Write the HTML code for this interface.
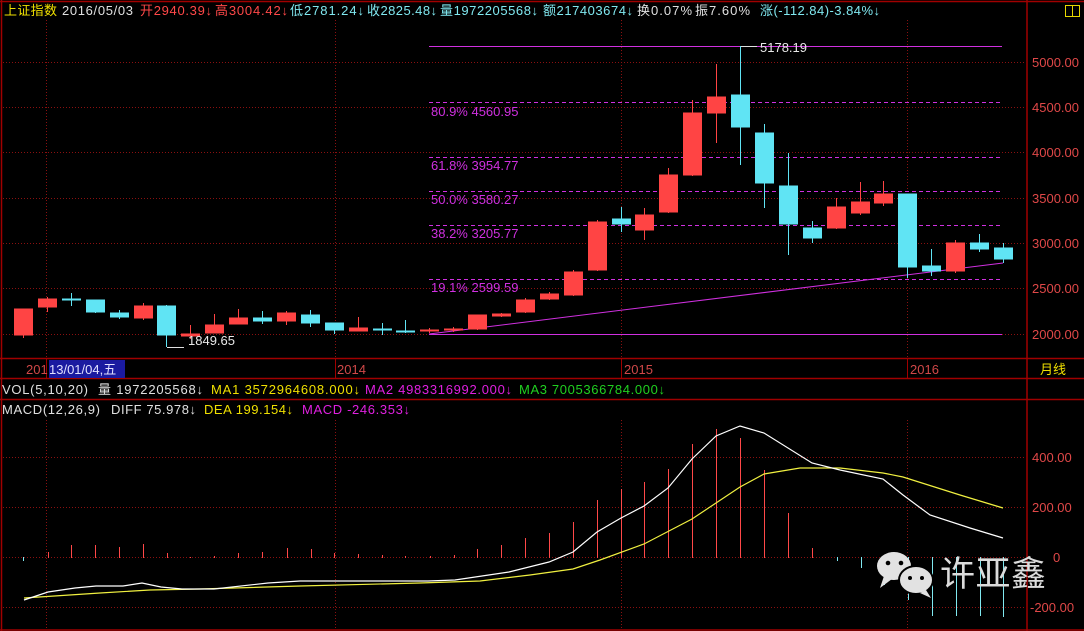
<!DOCTYPE html>
<html><head><meta charset="utf-8"><style>
html,body{margin:0;padding:0;background:#000;width:1084px;height:631px;overflow:hidden}
svg{display:block;font-family:"Liberation Sans","Noto Sans CJK SC",sans-serif}
</style></head><body>
<svg width="1084" height="631" viewBox="0 0 1084 631" xmlns="http://www.w3.org/2000/svg">
<rect width="1084" height="631" fill="#000"/>
<g stroke="#8a1010" stroke-width="1" stroke-dasharray="1,2">
<line x1="3" y1="62.5" x2="1026" y2="62.5"/><line x1="3" y1="107.5" x2="1026" y2="107.5"/>
<line x1="3" y1="152.5" x2="1026" y2="152.5"/><line x1="3" y1="198.5" x2="1026" y2="198.5"/>
<line x1="3" y1="243.5" x2="1026" y2="243.5"/><line x1="3" y1="288.5" x2="1026" y2="288.5"/>
<line x1="3" y1="334.5" x2="1026" y2="334.5"/>
<line x1="3" y1="457.5" x2="1026" y2="457.5"/><line x1="3" y1="507.5" x2="1026" y2="507.5"/>
<line x1="3" y1="557.5" x2="1026" y2="557.5"/><line x1="3" y1="607.5" x2="1026" y2="607.5"/>
<line x1="46.5" y1="20" x2="46.5" y2="358"/><line x1="335.5" y1="20" x2="335.5" y2="358"/>
<line x1="621.5" y1="20" x2="621.5" y2="358"/><line x1="907.5" y1="20" x2="907.5" y2="358"/>
<line x1="46.5" y1="420" x2="46.5" y2="630"/><line x1="335.5" y1="420" x2="335.5" y2="630"/>
<line x1="621.5" y1="420" x2="621.5" y2="630"/><line x1="907.5" y1="420" x2="907.5" y2="630"/>
</g>
<g stroke="#a00000" stroke-width="1.5" fill="none">
<line x1="0" y1="1.5" x2="1084" y2="1.5"/>
<line x1="1.5" y1="0" x2="1.5" y2="631"/>
<line x1="1027" y1="0" x2="1027" y2="631"/>
<line x1="0" y1="358.5" x2="1084" y2="358.5"/>
<line x1="0" y1="378.5" x2="1084" y2="378.5"/>
<line x1="0" y1="399.5" x2="1084" y2="399.5"/>
<line x1="0" y1="630" x2="1084" y2="630"/>
</g>
<g stroke="#a00000"><line x1="46.5" y1="359" x2="46.5" y2="378"/><line x1="335.5" y1="359" x2="335.5" y2="378"/><line x1="621.5" y1="359" x2="621.5" y2="378"/><line x1="907.5" y1="359" x2="907.5" y2="378"/></g>
<rect x="1065.5" y="5.5" width="14" height="11" fill="none" stroke="#e8d800" stroke-width="1"/>
<line x1="1072.5" y1="5" x2="1072.5" y2="16" stroke="#e8d800"/>

<g stroke="#d030e0" stroke-width="1">
<line x1="429" y1="46.5" x2="1002" y2="46.5"/>
<line x1="429" y1="334.5" x2="1002" y2="334.5"/>
<g stroke-dasharray="4,3">
<line x1="429" y1="102.5" x2="1002" y2="102.5"/>
<line x1="429" y1="157.5" x2="1002" y2="157.5"/>
<line x1="429" y1="191.5" x2="1002" y2="191.5"/>
<line x1="429" y1="225.5" x2="1002" y2="225.5"/>
<line x1="429" y1="279.5" x2="1002" y2="279.5"/>
</g>
<line x1="429" y1="334" x2="1003" y2="263"/>
</g>
<g fill="#d030e0" font-size="13">
<text x="431" y="116">80.9% 4560.95</text>
<text x="431" y="170">61.8% 3954.77</text>
<text x="431" y="204">50.0% 3580.27</text>
<text x="431" y="238">38.2% 3205.77</text>
<text x="431" y="292">19.1% 2599.59</text>
</g>

<g stroke-width="1">
<g fill="#ff4444" stroke="#ff4444" transform="translate(0.5,0)">
<line x1="23" y1="309" x2="23" y2="338"/><rect x="14" y="309" width="18" height="26"/>
<line x1="47" y1="297" x2="47" y2="312"/><rect x="38" y="299" width="18" height="8"/>
<line x1="143" y1="303" x2="143" y2="320"/><rect x="134" y="306" width="18" height="12"/>
<line x1="190" y1="325" x2="190" y2="339"/><rect x="181" y="334" width="18" height="2"/>
<line x1="214" y1="314" x2="214" y2="333"/><rect x="205" y="325" width="18" height="8"/>
<line x1="238" y1="309" x2="238" y2="324"/><rect x="229" y="318" width="18" height="6"/>
<line x1="286" y1="311" x2="286" y2="325"/><rect x="277" y="313" width="18" height="8"/>
<line x1="358" y1="317" x2="358" y2="331"/><rect x="349" y="328" width="18" height="3"/>
<line x1="429" y1="328" x2="429" y2="333"/><rect x="420" y="330" width="18" height="1"/>
<line x1="453" y1="327" x2="453" y2="332"/><rect x="444" y="329" width="18" height="1"/>
<line x1="477" y1="315" x2="477" y2="330"/><rect x="468" y="315" width="18" height="14"/>
<line x1="501" y1="313" x2="501" y2="317"/><rect x="492" y="314" width="18" height="2"/>
<line x1="525" y1="298" x2="525" y2="313"/><rect x="516" y="300" width="18" height="12"/>
<line x1="549" y1="292" x2="549" y2="300"/><rect x="540" y="294" width="18" height="5"/>
<line x1="573" y1="270" x2="573" y2="296"/><rect x="564" y="272" width="18" height="23"/>
<line x1="597" y1="220" x2="597" y2="271"/><rect x="588" y="222" width="18" height="48"/>
<line x1="644" y1="208" x2="644" y2="240"/><rect x="635" y="215" width="18" height="15"/>
<line x1="668" y1="168" x2="668" y2="213"/><rect x="659" y="175" width="18" height="37"/>
<line x1="692" y1="100" x2="692" y2="176"/><rect x="683" y="113" width="18" height="62"/>
<line x1="716" y1="64" x2="716" y2="143"/><rect x="707" y="97" width="18" height="16"/>
<line x1="836" y1="198" x2="836" y2="229"/><rect x="827" y="207" width="18" height="21"/>
<line x1="860" y1="182" x2="860" y2="215"/><rect x="851" y="202" width="18" height="11"/>
<line x1="883" y1="181" x2="883" y2="206"/><rect x="874" y="194" width="18" height="9"/>
<line x1="955" y1="240" x2="955" y2="273"/><rect x="946" y="243" width="18" height="28"/>
</g>
<g fill="#60e4f4" stroke="#60e4f4" transform="translate(0.5,0)">
<line x1="71" y1="293" x2="71" y2="306"/><rect x="62" y="299" width="18" height="1"/>
<line x1="95" y1="300" x2="95" y2="313"/><rect x="86" y="300" width="18" height="12"/>
<line x1="119" y1="310" x2="119" y2="319"/><rect x="110" y="313" width="18" height="4"/>
<line x1="166" y1="305" x2="166" y2="347"/><rect x="157" y="306" width="18" height="29"/>
<line x1="262" y1="311" x2="262" y2="324"/><rect x="253" y="318" width="18" height="3"/>
<line x1="310" y1="310" x2="310" y2="327"/><rect x="301" y="315" width="18" height="8"/>
<line x1="334" y1="323" x2="334" y2="334"/><rect x="325" y="323" width="18" height="7"/>
<line x1="382" y1="323" x2="382" y2="335"/><rect x="373" y="329" width="18" height="1"/>
<line x1="405" y1="320" x2="405" y2="333"/><rect x="396" y="331" width="18" height="1"/>
<line x1="621" y1="207" x2="621" y2="232"/><rect x="612" y="219" width="18" height="5"/>
<line x1="740" y1="46" x2="740" y2="165"/><rect x="731" y="95" width="18" height="32"/>
<line x1="764" y1="124" x2="764" y2="208"/><rect x="755" y="133" width="18" height="50"/>
<line x1="788" y1="153" x2="788" y2="255"/><rect x="779" y="186" width="18" height="38"/>
<line x1="812" y1="221" x2="812" y2="243"/><rect x="803" y="228" width="18" height="10"/>
<line x1="907" y1="194" x2="907" y2="278"/><rect x="898" y="194" width="18" height="73"/>
<line x1="931" y1="249" x2="931" y2="276"/><rect x="922" y="266" width="18" height="5"/>
<line x1="979" y1="234" x2="979" y2="252"/><rect x="970" y="243" width="18" height="6"/>
<line x1="1003" y1="243" x2="1003" y2="263"/><rect x="994" y="248" width="18" height="11"/>
</g>
</g>
<g stroke="#e0e0e0" fill="none"><polyline points="167,347.5 184,347.5"/><polyline points="741,46.5 757,46.5"/></g>
<g fill="#e8e8e8" font-size="13"><text x="188" y="345">1849.65</text><text x="760" y="52">5178.19</text></g>

<g fill="#e04848" font-size="13">
<text x="1032" y="67">5000.00</text><text x="1032" y="112">4500.00</text>
<text x="1032" y="157">4000.00</text><text x="1032" y="203">3500.00</text>
<text x="1032" y="248">3000.00</text><text x="1032" y="293">2500.00</text>
<text x="1032" y="339">2000.00</text>
<text x="1032" y="462">400.00</text><text x="1032" y="512">200.00</text>
<text x="1053" y="562">0</text><text x="1030" y="612">-200.00</text>
</g>

<rect x="49" y="360" width="76" height="18" fill="#1a1aa0"/>
<g font-size="13">
<text x="26" y="374" fill="#d04848">201</text>
<text x="49" y="374" fill="#e0e0ff">13/01/04,五</text>
<text x="337" y="374" fill="#d04848">2014</text>
<text x="624" y="374" fill="#d04848">2015</text>
<text x="910" y="374" fill="#d04848">2016</text>
<text x="1040" y="374" fill="#f0e000">月线</text>
</g>

<g font-size="13">
<text x="4" y="15" fill="#f0e000" textLength="53">上证指数</text>
<text x="62" y="15" fill="#e0e0e0" textLength="71">2016/05/03</text>
<text x="140" y="15" fill="#ff4848" textLength="72">开2940.39↓</text>
<text x="215" y="15" fill="#ff4848" textLength="73">高3004.42↓</text>
<text x="290" y="15" fill="#80e8f0" textLength="74">低2781.24↓</text>
<text x="367" y="15" fill="#80e8f0" textLength="70">收2825.48↓</text>
<text x="440" y="15" fill="#80e8f0" textLength="98">量1972205568↓</text>
<text x="543" y="15" fill="#80e8f0" textLength="90">额217403674↓</text>
<text x="637" y="15" fill="#e0e0e0" textLength="55">换0.07%</text>
<text x="695" y="15" fill="#e0e0e0" textLength="55">振7.60%</text>
<text x="760" y="15" fill="#80e8f0" textLength="120">涨(-112.84)-3.84%↓</text>
</g>
<g font-size="13">
<text x="2" y="394" fill="#e0e0e0" textLength="86">VOL(5,10,20)</text>
<text x="98" y="394" fill="#e0e0e0" textLength="105">量 1972205568↓</text>
<text x="211" y="394" fill="#f0e000" textLength="149">MA1 3572964608.000↓</text>
<text x="365" y="394" fill="#e020e0" textLength="147">MA2 4983316992.000↓</text>
<text x="519" y="394" fill="#20d020" textLength="146">MA3 7005366784.000↓</text>
<text x="2" y="414" fill="#e0e0e0" textLength="98">MACD(12,26,9)</text>
<text x="111" y="414" fill="#e0e0e0" textLength="85">DIFF 75.978↓</text>
<text x="204" y="414" fill="#f0e000" textLength="89">DEA 199.154↓</text>
<text x="302" y="414" fill="#e020e0" textLength="108">MACD -246.353↓</text>
</g>

<g stroke="#ff4848" stroke-width="1" transform="translate(0.5,0)">
<line x1="48" y1="552" x2="48" y2="558"/><line x1="71" y1="545" x2="71" y2="558"/>
<line x1="95" y1="545" x2="95" y2="558"/><line x1="119" y1="547" x2="119" y2="558"/>
<line x1="143" y1="544" x2="143" y2="558"/><line x1="167" y1="553" x2="167" y2="558"/>
<line x1="190" y1="557" x2="190" y2="558"/><line x1="214" y1="556" x2="214" y2="558"/>
<line x1="238" y1="553" x2="238" y2="558"/><line x1="262" y1="552" x2="262" y2="558"/>
<line x1="287" y1="548" x2="287" y2="558"/><line x1="311" y1="549" x2="311" y2="558"/>
<line x1="334" y1="553" x2="334" y2="558"/><line x1="358" y1="554" x2="358" y2="558"/>
<line x1="382" y1="555" x2="382" y2="558"/><line x1="405" y1="556" x2="405" y2="558"/>
<line x1="430" y1="556" x2="430" y2="558"/><line x1="454" y1="555" x2="454" y2="558"/>
<line x1="477" y1="549" x2="477" y2="558"/><line x1="501" y1="545" x2="501" y2="558"/>
<line x1="525" y1="538" x2="525" y2="558"/><line x1="549" y1="533" x2="549" y2="558"/>
<line x1="573" y1="522" x2="573" y2="558"/><line x1="597" y1="500" x2="597" y2="558"/>
<line x1="621" y1="489" x2="621" y2="558"/><line x1="644" y1="482" x2="644" y2="558"/>
<line x1="668" y1="469" x2="668" y2="558"/><line x1="692" y1="444" x2="692" y2="558"/>
<line x1="716" y1="429" x2="716" y2="558"/><line x1="740" y1="438" x2="740" y2="558"/>
<line x1="764" y1="470" x2="764" y2="558"/><line x1="788" y1="513" x2="788" y2="558"/>
<line x1="812" y1="548" x2="812" y2="558"/>
</g>
<g stroke="#80e8f0" stroke-width="1" transform="translate(0.5,0)">
<line x1="23" y1="557" x2="23" y2="561"/>
<line x1="837" y1="557" x2="837" y2="561"/><line x1="861" y1="557" x2="861" y2="568"/>
<line x1="884" y1="557" x2="884" y2="585"/><line x1="908" y1="557" x2="908" y2="600"/>
<line x1="932" y1="557" x2="932" y2="616"/><line x1="956" y1="557" x2="956" y2="616"/>
<line x1="980" y1="557" x2="980" y2="616"/><line x1="1003" y1="557" x2="1003" y2="617"/>
</g>
<polyline fill="none" stroke="#f0f040" stroke-width="1.2" points="24,598 100,593 150,590 200,589 300,586 420,583 480,581 530,575 573,569 600,560 644,544 692,519 740,487 764,474 800,468 840,468 883,473 903,477 960,495 1003,508"/>
<polyline fill="none" stroke="#ffffff" stroke-width="1.2" points="24,600 48,592 75,588 96,586 123,586 142,583 161,587 182,589 214,589 268,583 300,581 321,581 428,581 455,580 509,572 549,562 573,552 597,532 621,518 644,506 668,488 692,459 716,436 740,426 764,433 812,463 840,470 883,479 903,495 930,515 970,528 1003,538"/>

<g>
<ellipse cx="894" cy="566" rx="17" ry="14" fill="#e2e2e2"/>
<polygon points="884,576 880,588 892,579" fill="#e2e2e2"/>
<ellipse cx="916" cy="580" rx="17" ry="14" fill="#e2e2e2" stroke="#000" stroke-width="2"/>
<polygon points="926,590 931,598 920,593" fill="#e2e2e2"/>
<circle cx="888" cy="563" r="2.3" fill="#000"/><circle cx="901" cy="563" r="2.3" fill="#000"/>
<circle cx="910" cy="578" r="2" fill="#000"/><circle cx="922" cy="578" r="2" fill="#000"/>
<text x="940" y="586" font-size="35" fill="#dcdcdc" font-family="'Noto Sans CJK SC',sans-serif" textLength="106">许亚鑫</text>
</g>
</svg>
</body></html>
